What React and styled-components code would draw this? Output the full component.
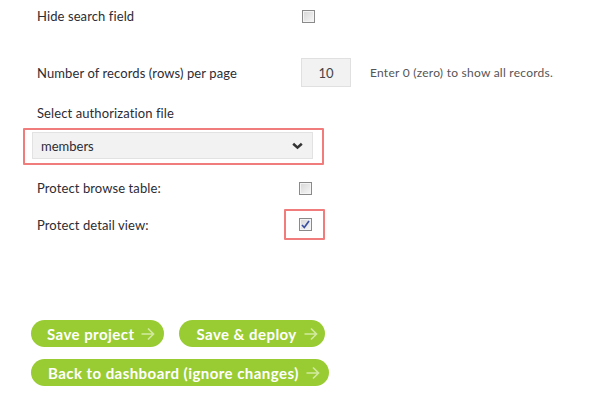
import React from "react";
import styled, { createGlobalStyle } from "styled-components";

const Global = createGlobalStyle`
  html, body { margin: 0; padding: 0; background: #fff; }
  body { font-family: Lato, "Open Sans", sans-serif; color: #2c2c34; }
`;

const Page = styled.div`
  width: 594px;
  height: 400px;
  overflow: hidden;
  display: flex;
  flex-direction: column;
`;

const Row = styled.div`
  display: flex;
  align-items: center;
  height: ${(p) => p.$h || 32}px;
  margin-top: ${(p) => p.$mt || 0}px;
  padding-left: 37px;
`;

const Label = styled.div`
  width: ${(p) => p.$w || 265}px;
  font-size: 13px;
  line-height: 20px;
  color: #2c2c34;
  letter-spacing: 0.1px;
`;

const Box = styled.div`
  width: 11px;
  height: 11px;
  border: 1px solid #8a8a8a;
  background: linear-gradient(135deg, #d6d6d6, #f7f7f7);
  box-shadow: inset 0 0 0 1px #f4f4f4;
  display: flex;
  align-items: center;
  justify-content: center;
`;

const Highlight = styled.div`
  border: 2px solid #f07c7c;
  border-radius: 1px;
  box-sizing: border-box;
`;

const CheckHighlight = styled(Highlight)`
  width: 41px;
  height: 31px;
  display: flex;
  align-items: center;
  padding-left: 13px;
`;

const NumberBox = styled.div`
  width: 48px;
  height: 27px;
  border: 1px solid #e0e0e0;
  background: #f2f2f2;
  display: flex;
  align-items: center;
  justify-content: center;
  font-size: 13px;
  color: #444;
`;

const Help = styled.div`
  margin-left: 19px;
  font-size: 12px;
  letter-spacing: 0.25px;
  color: #555;
`;

const SelectWrap = styled(Highlight)`
  margin-left: 23px;
  margin-top: 5px;
  width: 301px;
  height: 37px;
  padding: 2px 9px 4px 7px;
`;

const Select = styled.div`
  height: 27px;
  border: 1px solid #e2e2e2;
  background: #f2f2f2;
  display: flex;
  align-items: center;
  justify-content: space-between;
  padding: 0 9px 0 8px;
  font-size: 13px;
  color: #2c2c34;
  box-sizing: border-box;
`;

const Buttons = styled.div`
  display: flex;
  flex-wrap: wrap;
  gap: 12px 15px;
  padding-left: 31px;
  margin-top: ${(p) => p.$mt}px;
  width: 320px;
`;

const Button = styled.div`
  height: 27px;
  border-radius: 14px;
  background: #99cc33;
  color: #fff;
  font-weight: 700;
  font-size: 15px;
  display: flex;
  align-items: center;
  gap: 7px;
  padding: 0 ${(p) => p.$pr || 10}px 0 ${(p) => p.$pl || 16}px;
  letter-spacing: 0.45px;
`;

const Arrow = () => (
  <svg width="14" height="14" viewBox="0 0 14 14">
    <path d="M0.5 7h12M7 1.5l5.5 5.5-5.5 5.5" fill="none" stroke="#d2eaa0" strokeWidth="1.6" />
  </svg>
);

const Check = () => (
  <svg width="9" height="9" viewBox="0 0 9 9">
    <path d="M1 5l2.3 2.5L8 1" fill="none" stroke="#3a4fa0" strokeWidth="1.7" />
  </svg>
);

const Chevron = () => (
  <svg width="11" height="8" viewBox="0 0 11 8">
    <path d="M1.2 1.8l4.3 3.8 4.3-3.8" fill="none" stroke="#333" strokeWidth="2.6" />
  </svg>
);

export default function App() {
  return (
    <>
      <Global />
      <Page>
        <Row $h={32}>
          <Label $w={265}>Hide search field</Label>
          <Box />
        </Row>
        <Row $h={29} $mt={26}>
          <Label $w={264}>Number of records (rows) per page</Label>
          <NumberBox>10</NumberBox>
          <Help>Enter 0 (zero) to show all records.</Help>
        </Row>
        <Row $h={20} $mt={16}>
          <Label>Select authorization file</Label>
        </Row>
        <SelectWrap>
          <Select>
            <span>members</span>
            <Chevron />
          </Select>
        </SelectWrap>
        <Row $h={20} $mt={13}>
          <Label $w={262}>Protect browse table:</Label>
          <Box />
        </Row>
        <Row $h={31} $mt={11}>
          <Label $w={247}>Protect detail view:</Label>
          <CheckHighlight>
            <Box>
              <Check />
            </Box>
          </CheckHighlight>
        </Row>
        <Buttons $mt={80}>
          <Button $pl={16} $pr={9}>
            Save project <Arrow />
          </Button>
          <Button $pl={17} $pr={7}>
            Save &amp; deploy <Arrow />
          </Button>
          <Button $pl={17} $pr={9}>
            Back to dashboard (ignore changes) <Arrow />
          </Button>
        </Buttons>
      </Page>
    </>
  );
}
